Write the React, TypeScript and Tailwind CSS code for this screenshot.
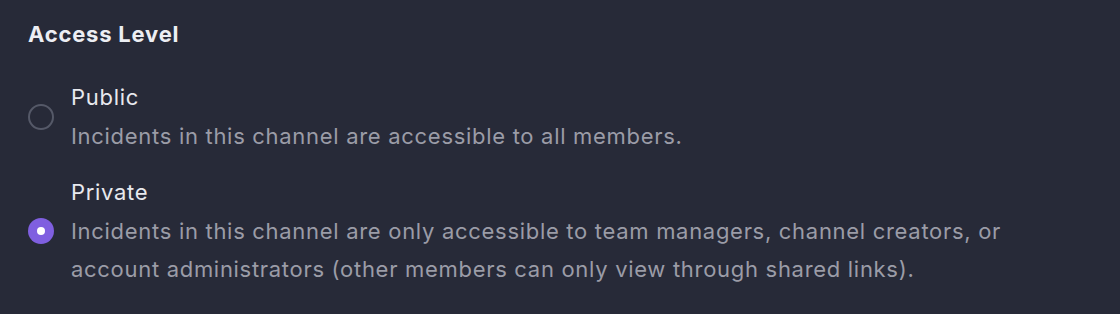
import { useState } from 'react'

const options = [
    {
        id: 'public',
        label: 'Public',
        description: 'Incidents in this channel are accessible to all members.',
    },
    {
        id: 'private',
        label: 'Private',
        description:
            'Incidents in this channel are only accessible to team managers, channel creators, or account administrators (other members can only view through shared links).',
    },
]

export default function App() {
    const [access, setAccess] = useState('private')

    return (
        <div className="min-h-screen w-full bg-[#272a38] px-[28px] pt-[18px] font-['Inter','Noto_Sans',sans-serif]">
            <h2 className="text-[22px] leading-[33px] font-bold tracking-[0.8px] text-[#eceef3]">Access Level</h2>

            <div className="mt-[27px] flex flex-col gap-[18px]">
                {options.map((opt) => {
                    const selected = access === opt.id
                    return (
                        <label key={opt.id} className="flex items-center gap-[17px] cursor-pointer" onClick={() => setAccess(opt.id)}>
                            {selected ? (
                                <span className="flex h-[26px] w-[26px] shrink-0 items-center justify-center rounded-full bg-[#7f5fe0]">
                                    <span className="h-[8px] w-[8px] rounded-full bg-white" />
                                </span>
                            ) : (
                                <span className="h-[26px] w-[26px] shrink-0 rounded-full border-2 border-[#555968]" />
                            )}
                            <div className="flex flex-col tracking-[0.7px]">
                                <span className="text-[22px] leading-[38.5px] text-[#e8e9ee]">{opt.label}</span>
                                <span className="text-[22px] leading-[38.5px] text-[#9b9ca7]">{opt.description}</span>
                            </div>
                        </label>
                    )
                })}
            </div>
        </div>
    )
}
